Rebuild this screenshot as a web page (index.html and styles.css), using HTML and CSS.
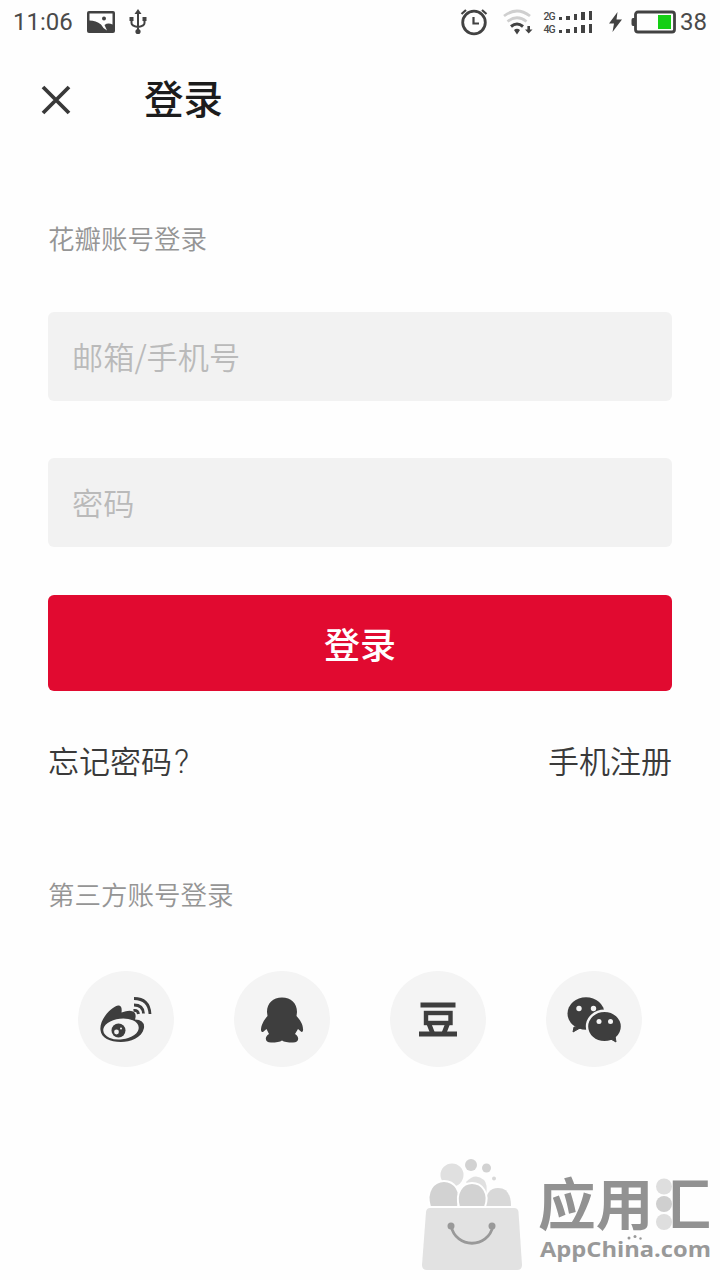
FILE: index.html
```html
<!DOCTYPE html>
<html lang="zh-CN">
<head>
    <meta charset="UTF-8">
    <meta name="viewport" content="width=device-width, initial-scale=1.0">
    <title>登录</title>
    <link rel="stylesheet" href="styles.css">
</head>
<body>
    <div class="screen">
        <div class="status-bar">
            <div class="status-left">
                <span class="clock">11:06</span>
                <svg class="icon-photo" width="28" height="22" viewBox="0 0 28 22">
                    <rect x="0" y="0" width="28" height="22" rx="2" fill="#424242"/>
                    <path d="M2.500 2.500H25.500V13.500Q21 11.500 17.500 14L20 19.500Q16 17.500 14 13.500Q9 9.500 2.500 9.500Z" fill="#fff"/>
                    <circle cx="17" cy="7.500" r="2" fill="#424242"/>
                </svg>
                <svg class="icon-usb" width="18" height="26" viewBox="0 0 18 26">
                    <path d="M9 3V23M2.500 10V14Q2.500 17 9 18Q15.500 17 15.500 14V10" fill="none" stroke="#424242" stroke-width="2"/>
                    <path d="M9 0L12.500 5H5.500Z" fill="#424242"/>
                    <rect x="0.500" y="8" width="4" height="4" fill="#424242"/>
                    <rect x="13.500" y="8" width="4" height="4" fill="#424242"/>
                    <circle cx="9" cy="22.500" r="2.600" fill="#424242"/>
                </svg>
            </div>
            <div class="status-right">
                <svg class="icon-alarm" width="28" height="28" viewBox="0 0 28 28">
                    <circle cx="14" cy="14.500" r="11.300" fill="none" stroke="#424242" stroke-width="2.800"/>
                    <path d="M13.500 9V15.500H19M1.500 6L6 2M22 2L26.500 6" fill="none" stroke="#424242" stroke-width="2.200"/>
                </svg>
                <svg class="icon-wifi" width="31" height="28" viewBox="0 0 31 28">
                    <path d="M2 8Q15 -2 28 8M5.500 13.500Q15 6 24.500 13.500" fill="none" stroke="#cfcfcf" stroke-width="2.800"/>
                    <path d="M9 18.500Q15 13.500 21 18.500" fill="none" stroke="#424242" stroke-width="3"/>
                    <path d="M12 22Q15 19.500 18 22L15 26.500ZM25.400 18H28V21.500H30.500L26.700 25.500L23 21.500H25.400Z" fill="#424242"/>
                </svg>
                <div class="signals">
                    <div class="signal">
                        <span class="net">2G</span>
                        <i class="bar b1"></i><i class="bar b2"></i><i class="bar b3"></i><i class="bar b4"></i><i class="bar b5"></i>
                    </div>
                    <div class="signal">
                        <span class="net">4G</span>
                        <i class="bar b1"></i><i class="bar b2"></i><i class="bar b3"></i><i class="bar b4"></i><i class="bar b5"></i>
                    </div>
                </div>
                <svg class="icon-bolt" width="13" height="20" viewBox="0 0 13 20">
                    <path d="M8.500 0L0 11.500H5L3.500 20L13 7.500H7.500Z" fill="#424242"/>
                </svg>
                <svg class="icon-battery" width="46" height="24" viewBox="0 0 46 24">
                    <rect x="4.500" y="2" width="39" height="20" rx="2.500" fill="none" stroke="#424242" stroke-width="2.800"/>
                    <path d="M4 8H2Q0.500 8 0.500 10V14Q0.500 16 2 16H4Z" fill="#424242"/>
                    <rect x="27" y="5" width="13" height="14" fill="#14cf14"/>
                </svg>
                <span class="battery-level">38</span>
            </div>
        </div>

        <header class="title-bar">
            <svg class="icon-close" width="30" height="30" viewBox="0 0 30 30">
                <path d="M2 2L28 28M28 2L2 28" stroke="#383838" stroke-width="3.800"/>
            </svg>
            <h1>登录</h1>
        </header>

        <main class="content">
            <p class="section-label">花瓣账号登录</p>
            <form class="login-form">
                <input class="field" type="text" placeholder="邮箱/手机号">
                <input class="field" type="password" placeholder="密码">
                <button class="login-btn" type="button">登录</button>
            </form>
            <div class="links">
                <a>忘记密码<span class="mark">?</span></a>
                <a>手机注册</a>
            </div>

            <p class="section-label third-label">第三方账号登录</p>
            <div class="socials">
                <div class="social">
                    <!-- weibo -->
                    <svg width="96" height="96" viewBox="0 0 96 96">
                        <path d="M22.500 59C21 49 33 36 40 34.500Q44.500 34 43.500 41.500Q53 38 56.500 41.500Q58.500 44 57 48.500Q67 49 66 57C64 67 52 71 43 71C32 71 23 67 22.500 59Z" fill="#3e3e3e"/>
                        <ellipse cx="43" cy="58" rx="17.800" ry="10.400" fill="#f4f4f4" transform="rotate(-6 43 58)"/>
                        <circle cx="40.500" cy="59.500" r="7" fill="#3e3e3e"/>
                        <circle cx="38.500" cy="61" r="2.400" fill="#f4f4f4"/>
                        <circle cx="43" cy="57.500" r="1" fill="#f4f4f4"/>
                        <path d="M56 27.500Q71 27.500 72 43M56 34Q65 34 65.500 42.500M55.500 39.500Q60 39 60.500 43" fill="none" stroke="#3e3e3e" stroke-width="2.800"/>
                    </svg>
                </div>
                <div class="social">
                    <!-- qq -->
                    <svg width="96" height="96" viewBox="0 0 96 96">
                        <path d="M48 26.500C39 26.500 33 32 33 41L33.500 45C30 49 27 54 27 59Q27 61.500 29 61L32.500 58L35 63C30 66 31 71.500 37 71.500Q45 71.500 48 69.500Q51 71.500 59 71.500C65 71.500 66 66 61 63L64 58L67.500 61Q69.500 61 69 58C69 53 66 49 62.500 45L63 41C63 32 57 26.500 48 26.500Z" fill="#3e3e3e"/>
                    </svg>
                </div>
                <div class="social">
                    <!-- douban -->
                    <svg width="96" height="96" viewBox="0 0 96 96">
                        <rect x="30.500" y="31.500" width="35" height="5" fill="#3e3e3e"/>
                        <rect x="36" y="42" width="24.500" height="10" fill="none" stroke="#3e3e3e" stroke-width="4.400"/>
                        <path d="M39 53L42.500 62M57.500 53L54 62" stroke="#3e3e3e" stroke-width="4.800"/>
                        <rect x="29" y="60.500" width="38" height="5" fill="#3e3e3e"/>
                    </svg>
                </div>
                <div class="social">
                    <!-- wechat -->
                    <svg width="96" height="96" viewBox="0 0 96 96">
                        <path d="M28 56L27 61L34 57Z" fill="#3e3e3e" stroke="#3e3e3e"/>
                        <ellipse cx="40" cy="42.500" rx="18.500" ry="16.200" fill="#3e3e3e"/>
                        <circle cx="33" cy="37.500" r="2.700" fill="#f4f4f4"/>
                        <circle cx="47.500" cy="37.500" r="2.700" fill="#f4f4f4"/>
                        <ellipse cx="58.500" cy="55.500" rx="17.500" ry="15.800" fill="#3e3e3e" stroke="#f4f4f4" stroke-width="2.400"/>
                        <path d="M63 67L70 71L69 65Z" fill="#3e3e3e" stroke="#3e3e3e"/>
                        <circle cx="53" cy="50.500" r="2.500" fill="#f4f4f4"/>
                        <circle cx="64.500" cy="50.500" r="2.500" fill="#f4f4f4"/>
                    </svg>
                </div>
            </div>
        </main>

        <footer class="store-mark">
            <svg class="bag" width="102" height="114" viewBox="0 0 102 114">
                <g fill="#e0e0e0">
                    <circle cx="31" cy="18" r="11.500"/>
                    <path d="M45 25Q54 15 63 23Q67 27 65 38H54Z"/>
                    <circle cx="50" cy="8" r="6" fill="#d2d2d2"/>
                    <circle cx="65.500" cy="11" r="4.500" fill="#d2d2d2"/>
                    <circle cx="73" cy="21.500" r="2" fill="#d8d8d8"/>
                    <path d="M65 49Q64 31 77 31T90 49Z" fill="#d8d8d8"/>
                </g>
                <g fill="#d2d2d2" stroke="#fff" stroke-width="2">
                    <path d="M9 50C4 34 13 24 23 24S42 34 37 50Z"/>
                    <path d="M38 50C34 36 41 26 51 26S69 36 64 50Z"/>
                </g>
                <path d="M9 51H93Q97 51 97.500 55L101 108Q101 113 96 113H6Q1 113 1 108L5 55Q5.500 51 9 51Z" fill="#e2e2e2"/>
                <path d="M30 69C35 92 67 92 72 69" fill="none" stroke="#999" stroke-width="2.800"/>
                <circle cx="30" cy="69" r="3.500" fill="#999"/>
                <circle cx="71" cy="69" r="3.500" fill="#999"/>
            </svg>
            <svg class="store-text" width="176" height="110" viewBox="0 0 176 110">
                <text class="store-name" x="0" y="68" textLength="173" lengthAdjust="spacingAndGlyphs">应用汇</text>
                <rect x="115" y="14" width="19" height="63" fill="#fefefe"/>
                <circle cx="126" cy="29.500" r="8" fill="#dedede"/>
                <circle cx="126" cy="47" r="8" fill="#cfcfcf"/>
                <circle cx="126" cy="65" r="8" fill="#dedede"/>
                <text class="store-url" x="2" y="100" textLength="171" lengthAdjust="spacingAndGlyphs">AppChina.com</text>
                <circle cx="91" cy="81" r="1.500" fill="#999"/>
                <circle cx="97" cy="79.500" r="1.500" fill="#999"/>
                <circle cx="102.500" cy="81.500" r="1.200" fill="#999"/>
            </svg>
        </footer>
    </div>
</body>
</html>
```
FILE: styles.css
```css
* {
    box-sizing: border-box;
    margin: 0;
    padding: 0;
}

body {
    width: 720px;
    background-color: #fefefe;
    font-family: "Noto Sans CJK SC", sans-serif;
    font-weight: 350;
    color: #3a3a3a;
}

.screen {
    display: flex;
    flex-direction: column;
    height: 1280px;
    overflow: hidden;
}

.status-bar {
    display: flex;
    justify-content: space-between;
    height: 44px;
    padding: 0 13px;
    font-family: Roboto, sans-serif;
    font-size: 24px;
    font-weight: 400;
    color: #4a4a4a;
}

.status-left,
.status-right {
    display: flex;
    align-items: center;
}

.clock {
    width: 60px;
}

.icon-photo {
    margin-left: 14px;
}

.icon-usb {
    margin-left: 14px;
}

.icon-wifi {
    margin-left: 14px;
}

.signals {
    margin-left: 11px;
}

.signal {
    display: flex;
    align-items: flex-end;
    height: 12.5px;
    gap: 4px;
}

.net {
    width: 11px;
    font-size: 10.5px;
    font-weight: 500;
    line-height: 10px;
    letter-spacing: -1px;
}

.bar {
    width: 3.5px;
    margin-bottom: 2px;
    background-color: #424242;
}

.b1 { height: 3px; }
.b2 { height: 4px; }
.b3 { height: 6px; }
.b4 { height: 8px; }
.b5 { height: 9px; }

.icon-bolt {
    margin-left: 17px;
}

.icon-battery {
    margin-left: 9px;
}

.battery-level {
    margin-left: 3px;
    font-weight: 400;
    line-height: 44px;
}

.title-bar {
    display: flex;
    align-items: center;
    height: 112px;
    padding-left: 41px;
}

h1 {
    margin: -6px 0 0 73px;
    font-size: 39.5px;
    font-weight: 500;
    line-height: 60px;
    color: #1c1c1c;
}

.content {
    padding: 62px 48px 0;
}

.section-label {
    height: 40px;
    font-size: 26.5px;
    line-height: 40px;
    color: #959595;
}

.login-form {
    display: flex;
    flex-direction: column;
    margin-top: 54px;
}

.field {
    height: 89px;
    margin-bottom: 57px;
    padding: 0 24px 2px;
    border: none;
    border-radius: 6px;
    background-color: #f2f2f2;
    font-family: inherit;
    font-size: 31.2px;
    font-weight: 350;
}

.field + .field {
    margin-bottom: 48px;
}

.field::placeholder {
    color: #bababa;
}

.login-btn {
    height: 96px;
    border: none;
    border-radius: 6px;
    background-color: #e10a30;
    font-family: inherit;
    font-size: 36px;
    font-weight: 500;
    color: #fff;
}

.links {
    display: flex;
    justify-content: space-between;
    height: 46px;
    margin-top: 46px;
    font-size: 31px;
    line-height: 46px;
}

.mark {
    margin-left: 2px;
    font-family: Roboto, sans-serif;
    font-size: 33px;
    line-height: 1;
}

.third-label {
    margin-top: 91px;
}

.socials {
    display: flex;
    justify-content: space-around;
    margin-top: 57px;
}

.social {
    width: 96px;
    height: 96px;
    border-radius: 50%;
    background-color: #f4f4f4;
}

.store-mark {
    display: flex;
    align-items: flex-start;
    gap: 15px;
    margin-top: 90px;
    padding-left: 421px;
}

.store-name {
    font-size: 56px;
    font-weight: 700;
    fill: #929292;
}

.store-url {
    font-family: "Open Sans", sans-serif;
    font-size: 22px;
    font-weight: 700;
    fill: #999;
}
```
